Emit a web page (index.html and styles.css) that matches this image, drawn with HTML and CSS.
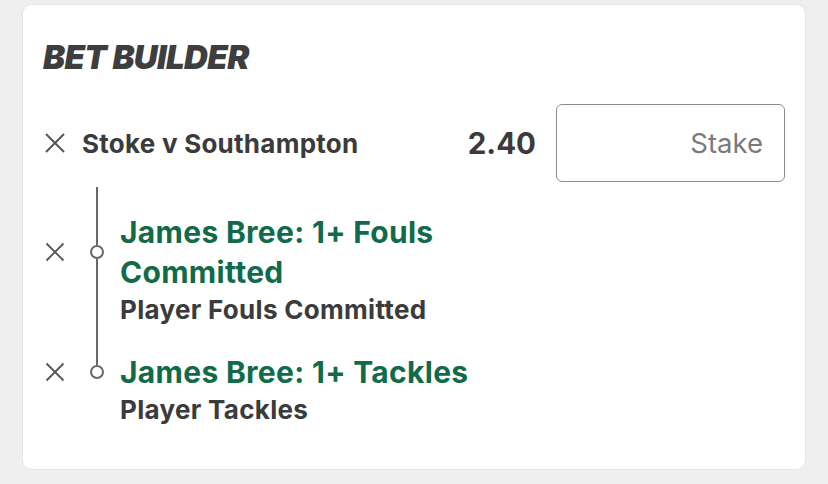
FILE: index.html
```html
<!DOCTYPE html>
<html>
<head>
<meta charset="utf-8">
<link rel="stylesheet" href="styles.css">
</head>
<body>
<div class="card">
  <h1 class="title">BET BUILDER</h1>
  <div class="event-row">
    <button class="remove remove-lg" aria-label="Remove">
      <svg viewBox="0 0 22 22" width="22" height="22"><path d="M2 2 L20 20 M20 2 L2 20" stroke="#555" stroke-width="2" fill="none"/></svg>
    </button>
    <div class="event-name">Stoke v Southampton</div>
    <div class="odds">2.40</div>
    <div class="stake">Stake</div>
  </div>
  <div class="stem"></div>
  <div class="leg">
    <button class="remove remove-sm" aria-label="Remove">
      <svg viewBox="0 0 20 20" width="20" height="20"><path d="M1.5 1.5 L18.5 18.5 M18.5 1.5 L1.5 18.5" stroke="#555" stroke-width="1.8" fill="none"/></svg>
    </button>
    <div class="conn"><span class="line"></span><span class="dot"></span><span class="line"></span></div>
    <div class="leg-title">James Bree: 1+ Fouls<br>Committed</div>
    <div class="conn-cont"><span class="line"></span></div>
    <div class="leg-market gap">Player Fouls Committed</div>
  </div>
  <div class="leg">
    <button class="remove remove-sm" aria-label="Remove">
      <svg viewBox="0 0 20 20" width="20" height="20"><path d="M1.5 1.5 L18.5 18.5 M18.5 1.5 L1.5 18.5" stroke="#555" stroke-width="1.8" fill="none"/></svg>
    </button>
    <div class="conn"><span class="line"></span><span class="dot"></span><span class="line blank"></span></div>
    <div class="leg-title">James Bree: 1+ Tackles</div>
    <div class="conn-cont"></div>
    <div class="leg-market">Player Tackles</div>
  </div>
</div>
</body>
</html>
```

FILE: styles.css
```css
* { box-sizing: border-box; }
html, body { margin: 0; padding: 0; }
body {
  background: #efefef;
  font-family: Inter, "Noto Sans", sans-serif;
  color: #3b3b3b;
  width: 828px;
  height: 484px;
  overflow: hidden;
  padding: 4px 0 0 22px;
}
.card {
  width: 784px;
  height: 466px;
  background: #fff;
  border-radius: 10px;
  border: 1px solid #e6e6e6;
  padding: 32px 20px 0 20px;
}
.title {
  margin: 0;
  font-size: 33px;
  line-height: 40px;
  font-weight: 900;
  font-style: italic;
  letter-spacing: -0.6px;
  color: #3e3e3e;
}
.remove {
  border: 0;
  background: none;
  padding: 0;
  margin: 0;
  display: flex;
  align-items: center;
  justify-content: center;
  cursor: pointer;
}
.event-row {
  display: flex;
  align-items: center;
  margin-top: 27px;
}
.remove-lg { width: 22px; height: 22px; margin-left: 1px; }
.event-name {
  margin-left: 16px;
  font-size: 26px;
  letter-spacing: 0.25px;
  font-weight: 700;
  flex: 1;
}
.odds {
  font-size: 29.5px;
  font-weight: 700;
  margin-right: 20px;
}
.stake {
  width: 229px;
  height: 78px;
  border: 1.5px solid #8c8c8c;
  border-radius: 6px;
  display: flex;
  align-items: center;
  justify-content: flex-end;
  padding-right: 21px;
  font-size: 27.5px;
  color: #7a7a7a;
}
.stem {
  width: 2px;
  height: 25px;
  background: #686868;
  margin: 5px 0 0 53px;
}
.leg {
  display: grid;
  grid-template-columns: 42px 24px 1fr;
  grid-template-rows: auto auto;
  align-items: stretch;
}
.leg .remove-sm { grid-column: 1; grid-row: 1; width: 20px; height: 100%; margin-left: 2px; }
.conn {
  grid-column: 2; grid-row: 1;
  display: flex;
  flex-direction: column;
  align-items: center;
}
.conn .line { flex: 1; width: 2px; background: #686868; }
.conn .line.blank { background: transparent; }
.dot {
  width: 14px; height: 14px;
  border: 2px solid #686868;
  border-radius: 50%;
  background: #fff;
  flex: none;
}
.conn-cont {
  grid-column: 2; grid-row: 2;
  display: flex;
  justify-content: center;
}
.conn-cont .line { width: 2px; background: #686868; }
.leg-title {
  grid-column: 3; grid-row: 1;
  padding-left: 11px;
  font-size: 30px;
  letter-spacing: 0.3px;
  line-height: 40px;
  font-weight: 700;
  color: #116b49;
}
.leg-market {
  grid-column: 3; grid-row: 2;
  padding-left: 11px;
  font-size: 26px;
  letter-spacing: 0.3px;
  line-height: 36px;
  font-weight: 700;
  color: #3b3b3b;
}
.leg-market.gap { padding-bottom: 24px; }
```
